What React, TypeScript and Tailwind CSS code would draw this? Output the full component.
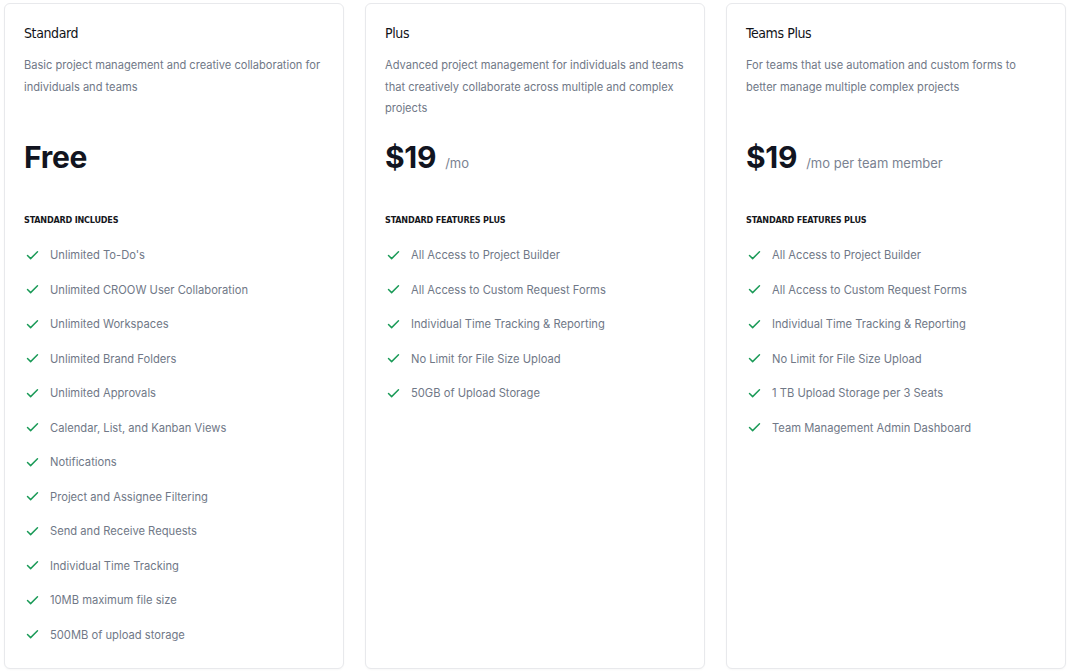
import { Check } from 'lucide-react'

interface Plan {
    name: string
    description: string
    price: string
    unit?: string
    label: string
    features: string[]
}

const plans: Plan[] = [
    {
        name: 'Standard',
        description: 'Basic project management and creative collaboration for individuals and teams',
        price: 'Free',
        label: 'Standard includes',
        features: [
            "Unlimited To-Do's",
            'Unlimited CROOW User Collaboration',
            'Unlimited Workspaces',
            'Unlimited Brand Folders',
            'Unlimited Approvals',
            'Calendar, List, and Kanban Views',
            'Notifications',
            'Project and Assignee Filtering',
            'Send and Receive Requests',
            'Individual Time Tracking',
            '10MB maximum file size',
            '500MB of upload storage',
        ],
    },
    {
        name: 'Plus',
        description: 'Advanced project management for individuals and teams that creatively collaborate across multiple and complex projects',
        price: '$19',
        unit: '/mo',
        label: 'Standard features plus',
        features: [
            'All Access to Project Builder',
            'All Access to Custom Request Forms',
            'Individual Time Tracking & Reporting',
            'No Limit for File Size Upload',
            '50GB of Upload Storage',
        ],
    },
    {
        name: 'Teams Plus',
        description: 'For teams that use automation and custom forms to better manage multiple complex projects',
        price: '$19',
        unit: '/mo per team member',
        label: 'Standard features plus',
        features: [
            'All Access to Project Builder',
            'All Access to Custom Request Forms',
            'Individual Time Tracking & Reporting',
            'No Limit for File Size Upload',
            '1 TB Upload Storage per 3 Seats',
            'Team Management Admin Dashboard',
        ],
    },
]

// condensed heading face
const condensed = "font-['DejaVu_Sans',sans-serif] [font-stretch:condensed]"

const PlanCard = ({ plan }: { plan: Plan }) => {
    return (
        <div className="flex flex-col rounded-[6px] border border-[#e8e9ec] bg-white pl-[19px] pr-[14px] pt-[18px] pb-[24px] shadow-[0_1px_2px_rgba(0,0,0,0.03)]">
            <h3 className={`${condensed} text-[14px] leading-[22px] tracking-[-0.4px] text-[#111318]`}>
                {plan.name}
            </h3>
            <p className="mt-[11px] h-[65px] max-w-[301px] text-[11.1px] leading-[21.5px] text-[#707887]">
                {plan.description}
            </p>
            <div className="mt-[19px] flex items-baseline h-[36px]">
                <span className="text-[30px] leading-[36px] font-bold tracking-[-0.3px] text-[#111420]">
                    {plan.price}
                </span>
                {plan.unit && (
                    <span className="ml-[9px] text-[13px] text-[#7a8291]">{plan.unit}</span>
                )}
            </div>
            <div className={`${condensed} mt-[38px] text-[9px] leading-[14px] font-bold uppercase tracking-[-0.2px] text-[#15171c]`}>
                {plan.label}
            </div>
            <ul className="mt-[19px] flex flex-col gap-[16.5px]">
                {plan.features.map(feature => (
                    <li key={feature} className="flex items-center h-[18px]">
                        <Check className="ml-[1px] h-[15px] w-[15px] text-[#1a9a57]" strokeWidth={2.3} />
                        <span className="ml-[10px] text-[11.2px] leading-[18px] text-[#707887]">{feature}</span>
                    </li>
                ))}
            </ul>
        </div>
    )
}

export default function App() {
    return (
        <div className="min-h-screen bg-white px-[4px] pt-[3px] pb-[3px] font-['Inter',sans-serif]">
            <div className="grid grid-cols-3 gap-[21px]">
                {plans.map(plan => (
                    <PlanCard key={plan.name} plan={plan} />
                ))}
            </div>
        </div>
    )
}
